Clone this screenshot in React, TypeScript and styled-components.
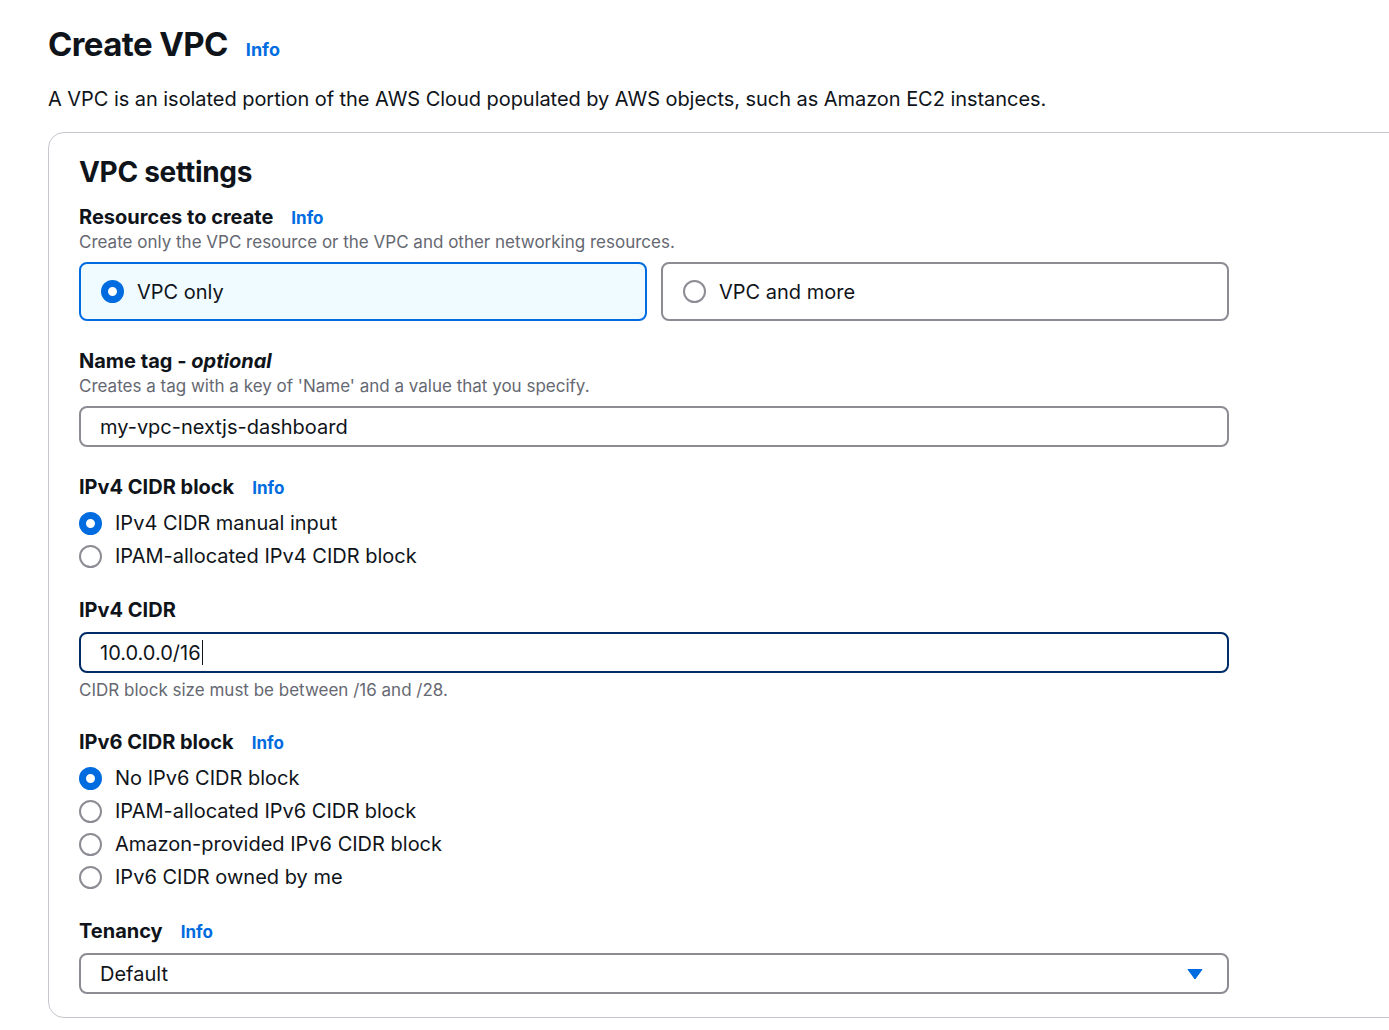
import React from "react";
import styled, { createGlobalStyle } from "styled-components";

const GlobalStyle = createGlobalStyle`
  html, body {
    margin: 0;
    padding: 0;
    background: #ffffff;
    overflow-x: hidden;
  }
  body {
    font-family: Inter, "Noto Sans", Arial, sans-serif;
    color: #0f141a;
    -webkit-font-smoothing: antialiased;
  }
  * { box-sizing: border-box; }
`;

const Page = styled.div`
  padding: 23px 0 0 48px;
`;

const TitleRow = styled.div`
  display: flex;
  align-items: baseline;
  gap: 18px;
`;

const Title = styled.h1`
  margin: 0;
  font-size: 33px;
  line-height: 42px;
  font-weight: 700;
  letter-spacing: -0.6px;
`;

const InfoLink = styled.a<{ $size?: number }>`
  color: #006ce0;
  font-weight: 700;
  font-size: ${(p) => p.$size ?? 17}px;
  text-decoration: none;
  cursor: pointer;
`;

const PageDescription = styled.p`
  margin: 20px 0 0 0;
  font-size: 20px;
  line-height: 28px;
  letter-spacing: -0.05px;
`;

const Card = styled.section`
  margin-top: 19px;
  width: calc(100vw + 40px);
  border: 1px solid #c6c6cd;
  border-radius: 16px;
  padding: 22px 30px 23px 30px;
`;

const CardBody = styled.div`
  width: 1150px;
  display: flex;
  flex-direction: column;
  gap: 26px;
`;

const CardTitle = styled.h2`
  margin: 0 0 -12px 0;
  font-size: 28px;
  line-height: 34px;
  font-weight: 700;
  letter-spacing: -0.3px;
`;

const Field = styled.div`
  display: flex;
  flex-direction: column;
`;

const LabelRow = styled.div`
  display: flex;
  align-items: baseline;
  gap: 18px;
`;

const Label = styled.label`
  font-size: 20px;
  line-height: 28px;
  font-weight: 700;
  em {
    font-style: italic;
  }
`;

const Description = styled.div`
  font-size: 17px;
  line-height: 23px;
  color: #656871;
`;

const Constraint = styled(Description)`
  margin-top: 6px;
`;

const Control = styled.div`
  margin-top: 8px;
`;

const TileGrid = styled.div`
  display: grid;
  grid-template-columns: 1fr 1fr;
  gap: 14px;
`;

const Tile = styled.div<{ $selected?: boolean }>`
  height: 59px;
  display: flex;
  align-items: center;
  gap: 13px;
  padding: 0 20px;
  border: 2px solid ${(p) => (p.$selected ? "#006ce0" : "#8c8c94")};
  background: ${(p) => (p.$selected ? "#f0fbff" : "#ffffff")};
  border-radius: 8px;
  font-size: 20px;
  cursor: pointer;
`;

const RadioCircle = styled.span<{ $checked?: boolean }>`
  flex: none;
  width: 23px;
  height: 23px;
  border-radius: 50%;
  border: ${(p) => (p.$checked ? "7.5px solid #006ce0" : "2.5px solid #8c8c94")};
  background: #ffffff;
`;

const RadioList = styled.div`
  display: flex;
  flex-direction: column;
  gap: 5px;
`;

const RadioRow = styled.div`
  display: flex;
  align-items: center;
  gap: 13px;
  font-size: 20px;
  line-height: 28px;
  cursor: pointer;
`;

const InputBox = styled.div<{ $focused?: boolean }>`
  height: 41px;
  display: flex;
  align-items: center;
  padding: 0 19px;
  border: ${(p) => (p.$focused ? "2.5px solid #002b66" : "2px solid #8c8c94")};
  border-radius: 8px;
  font-size: 20px;
  color: #0f141a;
`;

const Caret = styled.span`
  display: inline-block;
  width: 1.5px;
  height: 25px;
  background: #0f141a;
  margin-left: 1px;
`;

const SelectBox = styled(InputBox)`
  justify-content: space-between;
  padding-right: 24px;
  cursor: pointer;
`;

function Radio({ checked, label }: { checked?: boolean; label: string }) {
  return (
    <RadioRow>
      <RadioCircle $checked={checked} />
      <span>{label}</span>
    </RadioRow>
  );
}

export default function App() {
  return (
    <>
      <GlobalStyle />
      <Page>
        <TitleRow>
          <Title>Create VPC</Title>
          <InfoLink $size={18}>Info</InfoLink>
        </TitleRow>
        <PageDescription>
          A VPC is an isolated portion of the AWS Cloud populated by AWS objects, such as Amazon EC2 instances.
        </PageDescription>
        <Card>
          <CardBody>
            <CardTitle>VPC settings</CardTitle>

            <Field>
              <LabelRow>
                <Label>Resources to create</Label>
                <InfoLink>Info</InfoLink>
              </LabelRow>
              <Description>Create only the VPC resource or the VPC and other networking resources.</Description>
              <Control>
                <TileGrid>
                  <Tile $selected>
                    <RadioCircle $checked />
                    <span>VPC only</span>
                  </Tile>
                  <Tile>
                    <RadioCircle />
                    <span>VPC and more</span>
                  </Tile>
                </TileGrid>
              </Control>
            </Field>

            <Field>
              <LabelRow>
                <Label>
                  Name tag - <em>optional</em>
                </Label>
              </LabelRow>
              <Description>Creates a tag with a key of 'Name' and a value that you specify.</Description>
              <Control>
                <InputBox>my-vpc-nextjs-dashboard</InputBox>
              </Control>
            </Field>

            <Field>
              <LabelRow>
                <Label>IPv4 CIDR block</Label>
                <InfoLink>Info</InfoLink>
              </LabelRow>
              <Control>
                <RadioList>
                  <Radio checked label="IPv4 CIDR manual input" />
                  <Radio label="IPAM-allocated IPv4 CIDR block" />
                </RadioList>
              </Control>
            </Field>

            <Field>
              <LabelRow>
                <Label>IPv4 CIDR</Label>
              </LabelRow>
              <Control>
                <InputBox $focused>
                  <span>10.0.0.0/16</span>
                  <Caret />
                </InputBox>
              </Control>
              <Constraint>CIDR block size must be between /16 and /28.</Constraint>
            </Field>

            <Field>
              <LabelRow>
                <Label>IPv6 CIDR block</Label>
                <InfoLink>Info</InfoLink>
              </LabelRow>
              <Control>
                <RadioList>
                  <Radio checked label="No IPv6 CIDR block" />
                  <Radio label="IPAM-allocated IPv6 CIDR block" />
                  <Radio label="Amazon-provided IPv6 CIDR block" />
                  <Radio label="IPv6 CIDR owned by me" />
                </RadioList>
              </Control>
            </Field>

            <Field>
              <LabelRow>
                <Label>Tenancy</Label>
                <InfoLink>Info</InfoLink>
              </LabelRow>
              <Control>
                <SelectBox>
                  <span>Default</span>
                  <svg width="16" height="12" viewBox="0 0 16 12" aria-hidden="true">
                    <path d="M1 1.5 L15 1.5 L8 11 Z" fill="#006ce0" stroke="#006ce0" strokeWidth="1" strokeLinejoin="round" />
                  </svg>
                </SelectBox>
              </Control>
            </Field>
          </CardBody>
        </Card>
      </Page>
    </>
  );
}
